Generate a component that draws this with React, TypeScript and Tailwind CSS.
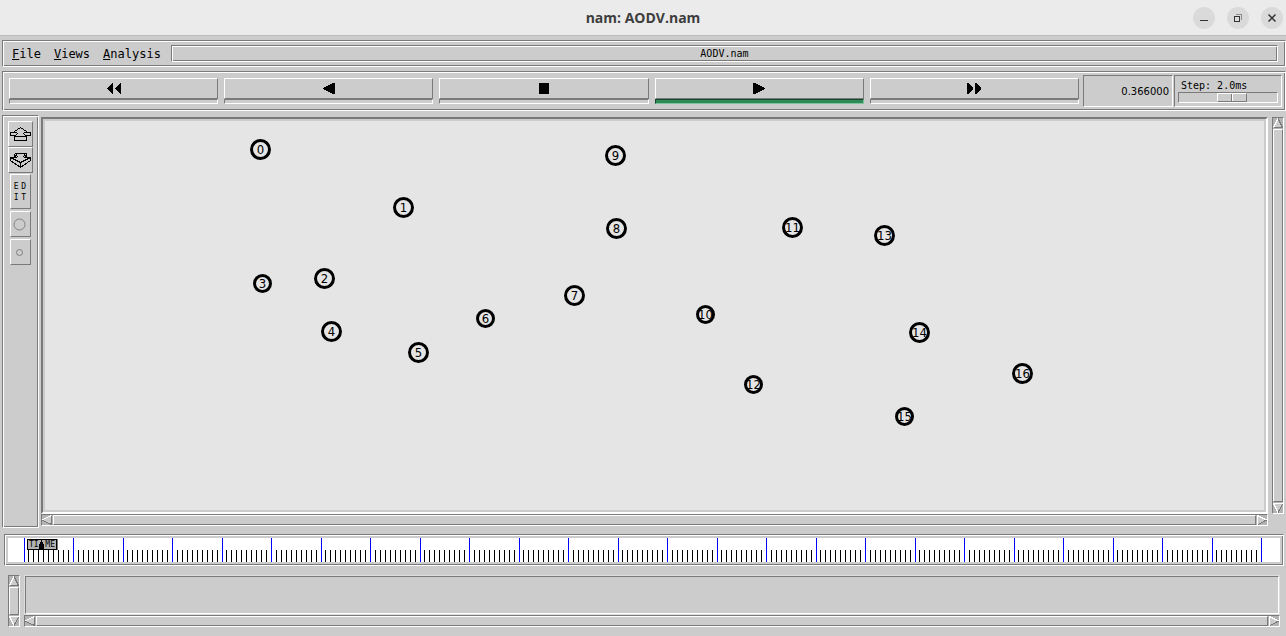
import React, { useState } from "react";

type Direction = "up" | "down" | "left" | "right";

const raised = "border border-t-white border-l-white border-b-[#7a7a7a] border-r-[#7a7a7a]";
const sunken = "border border-t-[#7a7a7a] border-l-[#7a7a7a] border-b-white border-r-white";
const groove = `${sunken} shadow-[inset_1px_1px_0_#ffffff,inset_-1px_-1px_0_#7a7a7a]`;
const mono = "font-['DejaVu_Sans_Mono','Liberation_Mono',monospace]";

const nodes = [
  { id: 0, x: 215, y: 28, r: 10 },
  { id: 1, x: 358, y: 86, r: 10 },
  { id: 2, x: 279, y: 157, r: 10 },
  { id: 3, x: 217, y: 162, r: 9 },
  { id: 4, x: 286, y: 210, r: 10 },
  { id: 5, x: 373, y: 231, r: 10 },
  { id: 6, x: 440, y: 197, r: 9 },
  { id: 7, x: 529, y: 174, r: 10 },
  { id: 8, x: 571, y: 107, r: 10 },
  { id: 9, x: 570, y: 34, r: 10 },
  { id: 10, x: 660, y: 193, r: 9 },
  { id: 11, x: 747, y: 106, r: 10 },
  { id: 12, x: 708, y: 263, r: 9 },
  { id: 13, x: 839, y: 114, r: 10 },
  { id: 14, x: 874, y: 211, r: 10 },
  { id: 15, x: 859, y: 295, r: 9 },
  { id: 16, x: 977, y: 252, r: 10 },
];

const ticks = Array.from({ length: 251 }, (_, i) => ({
  major: i % 10 === 0,
  left: ((15.54 + i * 4.95) / 1272) * 100,
}));

function TitleBar() {
  const round = "flex size-[22px] items-center justify-center rounded-full bg-[#dadada]";
  return (
    <header className="grid h-9 grid-cols-[1fr_auto_1fr] items-center border-b border-[#bcbcbc] bg-[#ebebeb] px-[3px]">
      <span />
      <h1 className="font-['Open_Sans','Noto_Sans',sans-serif] text-sm font-bold text-[#3d3d3d]">nam: AODV.nam</h1>
      <div className="flex justify-end gap-3">
        <button aria-label="Minimize" className={round}>
          <svg width="12" height="12" shapeRendering="crispEdges"><path d="M2 8.5H10" stroke="#333" /></svg>
        </button>
        <button aria-label="Restore" className={round}>
          <svg width="12" height="12" shapeRendering="crispEdges" fill="none">
            <path d="M4 2.5H9.5V8" stroke="#8c8c8c" />
            <path d="M2.5 4.5H7.5V9.5H2.5Z" stroke="#333" />
          </svg>
        </button>
        <button aria-label="Close" className={round}>
          <svg width="12" height="12"><path d="M2.5 2.5L9.5 9.5M9.5 2.5L2.5 9.5" stroke="#333" strokeWidth="1.5" /></svg>
        </button>
      </div>
    </header>
  );
}

function MenuBar() {
  return (
    <div className={`flex h-[27px] items-center gap-[10px] pr-[7px] pl-[9px] ${groove}`}>
      <nav className={`flex gap-[13px] text-xs ${mono}`}>
        {["File", "Views", "Analysis"].map((name) => (
          <button key={name}>
            <span className="underline underline-offset-1">{name[0]}</span>
            {name.slice(1)}
          </button>
        ))}
      </nav>
      <div className={`flex h-[17px] flex-1 items-center justify-center text-[10px] ${mono} ${groove}`}>AODV.nam</div>
    </div>
  );
}

const playback = [
  { name: "Rewind", path: "M6 0V11H5L0 6V5L5 0ZM14 0V11H13L8 6V5L13 0Z" },
  { name: "Play backward", path: "M13 0V11H11L1 6V5L11 0Z" },
  { name: "Stop", path: "M2 0H12V11H2Z" },
  { name: "Play", path: "M1 0V11H3L13 6V5L3 0Z" },
  { name: "Fast forward", path: "M0 0V11H1L6 6V5L1 0ZM8 0V11H9L14 6V5L9 0Z" },
];

function Toolbar() {
  const [active, setActive] = useState("Play");
  const [step, setStep] = useState(56);
  return (
    <div className={`flex h-10 gap-1 py-[3px] pr-[3px] pl-[6px] ${groove}`}>
      <div className="flex flex-1 gap-[6px] py-[3px]">
        {playback.map((item) => (
          <div key={item.name} className="flex flex-1 flex-col">
            <button
              aria-label={item.name}
              onClick={() => setActive(item.name)}
              className={`flex h-[21px] items-center justify-center ${raised}`}
            >
              <svg width="14" height="11" shapeRendering="crispEdges"><path d={item.path} /></svg>
            </button>
            <div
              className={
                active === item.name
                  ? "h-[5px] border border-t-[#17472c] border-r-[#7fc39b] border-b-[#7fc39b] border-l-[#17472c] bg-[#2e8b57]"
                  : `h-[5px] ${sunken}`
              }
            />
          </div>
        ))}
      </div>
      <div className="flex gap-px">
        <output
          className={`flex w-[90px] items-center justify-end pr-[3px] font-['DejaVu_Sans',sans-serif] text-[10px] ${sunken}`}
        >
          0.366000
        </output>
        <div className={`flex w-[108px] flex-col justify-end px-[3px] pb-[3px] ${sunken}`}>
          <label htmlFor="step" className={`pl-[3px] text-[10px] leading-3 ${mono}`}>Step: 2.0ms</label>
          <input
            id="step"
            type="range"
            min={0}
            max={100}
            value={step}
            onChange={(e) => setStep(Number(e.target.value))}
            className={`h-[11px] w-full appearance-none bg-[#cccccc] ${sunken} [&::-webkit-slider-thumb]:h-[9px] [&::-webkit-slider-thumb]:w-[30px] [&::-webkit-slider-thumb]:appearance-none [&::-webkit-slider-thumb]:rounded-none [&::-webkit-slider-thumb]:border [&::-webkit-slider-thumb]:border-t-white [&::-webkit-slider-thumb]:border-r-[#7a7a7a] [&::-webkit-slider-thumb]:border-b-[#7a7a7a] [&::-webkit-slider-thumb]:border-l-white [&::-webkit-slider-thumb]:bg-[linear-gradient(90deg,#cccccc_13px,#7a7a7a_13px,#7a7a7a_14px,#ffffff_14px,#ffffff_15px,#cccccc_15px)]`}
          />
        </div>
      </div>
    </div>
  );
}

const arrows: Record<Direction, { light: string; dark: string; fill: string }> = {
  up: { fill: "M5 0L10 10H0Z", light: "M0.5 9.5L5 0.5", dark: "M5 0.5L9.5 9.5H0.5" },
  down: { fill: "M0 0H10L5 10Z", light: "M10 0.5H0.5L5 9.5", dark: "M5 9.5L9.5 1" },
  left: { fill: "M10 0V10L0 5Z", light: "M0 5L9.5 0.5", dark: "M0 5L9.5 9.5V0.5" },
  right: { fill: "M0 0V10L10 5Z", light: "M0.5 10V0.5L9.5 5", dark: "M9.5 5L1 9.5" },
};

function ArrowButton({ dir }: { dir: Direction }) {
  const a = arrows[dir];
  return (
    <button aria-label={`Scroll ${dir}`} className="size-[10px] shrink-0 bg-[#b3b3b3]">
      <svg className="block" width="10" height="10" shapeRendering="crispEdges" fill="none">
        <path d={a.fill} fill="#cccccc" />
        <path d={a.dark} stroke="#7a7a7a" />
        <path d={a.light} stroke="#ffffff" />
      </svg>
    </button>
  );
}

function ScrollBar({ vertical = false }: { vertical?: boolean }) {
  return (
    <div className={`flex gap-px bg-[#b3b3b3] ${sunken} ${vertical ? "w-3 flex-col" : "h-3"}`}>
      <ArrowButton dir={vertical ? "up" : "left"} />
      <div className={`flex-1 bg-[#cccccc] ${raised}`} />
      <ArrowButton dir={vertical ? "down" : "right"} />
    </div>
  );
}

function ToolBox() {
  return (
    <aside className={`flex w-[37px] flex-col items-center pt-[5px] pr-[1px] ${groove}`}>
      <button aria-label="Zoom in" className={`h-[26px] w-[25px] ${raised}`}>
        <svg className="block" width="23" height="24" shapeRendering="crispEdges" fill="none" stroke="#000">
          <path d="M11.5 5.5L5.5 9.5V10.5M11.5 5.5L17.5 9.5V10.5M1.5 10.5H7.5L8.5 11.5L6.5 13.5H1.5ZM21.5 10.5H15.5L14.5 11.5L16.5 13.5H21.5ZM5.5 14.5H17.5V18.5H5.5Z" />
        </svg>
      </button>
      <button aria-label="Zoom out" className={`h-[26px] w-[25px] ${raised}`}>
        <svg className="block" width="23" height="24" shapeRendering="crispEdges" fill="none" stroke="#000">
          <path d="M5.5 5.5H17.5V8.5L15.5 7.5M5.5 5.5V8.5L7.5 7.5M6.5 5.5L8.5 8.5L7.5 9.5H1.5V12.5L11.5 19.5L21.5 12.5V9.5H15.5L14.5 8.5L16.5 5.5M1.5 9.5L11.5 14.5L21.5 9.5M11.5 14.5V19.5" />
        </svg>
      </button>
      <button
        className={`mt-px grid h-[35px] w-[21px] grid-cols-2 content-center px-[2px] text-center text-[8px] leading-[11px] ${mono} ${raised}`}
      >
        <span>E</span>
        <span>D</span>
        <span>I</span>
        <span>T</span>
      </button>
      <button aria-label="Larger nodes" className={`mt-[2px] flex h-[26px] w-[21px] items-center justify-center pr-[2px] ${raised}`}>
        <svg width="13" height="13" fill="none" stroke="#808080"><circle cx="6.5" cy="6.5" r="5.5" /></svg>
      </button>
      <button aria-label="Smaller nodes" className={`mt-[2px] flex h-[26px] w-[21px] items-center justify-center pr-[2px] ${raised}`}>
        <svg width="7" height="7" fill="none" stroke="#808080"><circle cx="3.5" cy="3.5" r="3" /></svg>
      </button>
    </aside>
  );
}

function NetworkView() {
  return (
    <div className="flex flex-1 flex-col border-2 border-t-[#7a7a7a] border-r-white border-b-white border-l-[#7a7a7a] p-[2px]">
      <div className="relative min-h-80 flex-1 overflow-hidden bg-[#e5e5e5]">
        {nodes.map((n) => (
          <div
            key={n.id}
            className={`absolute flex items-center justify-center rounded-full border-[3px] border-black font-['DejaVu_Sans_Condensed','DejaVu_Sans',sans-serif] text-[13px] leading-3 ${n.r === 10 ? "size-[21px]" : "size-[19px]"}`}
            style={{ left: n.x - n.r, top: n.y - n.r }}
          >
            {n.id}
          </div>
        ))}
      </div>
    </div>
  );
}

function TimeLine() {
  return (
    <div className={`mr-[2px] ml-[2px] p-[3px] ${groove}`}>
      <div className="relative h-6 bg-white">
        <svg className="block h-6 w-full" shapeRendering="crispEdges">
          {ticks.map((t, i) => (
            <rect
              key={i}
              x={`${t.left}%`}
              y={t.major ? 0 : 12}
              width="1"
              height={t.major ? 24 : 12}
              fill={t.major ? "#0000ff" : "#000000"}
            />
          ))}
        </svg>
        <div
          className={`absolute top-px left-[19px] flex h-[11px] w-[30px] items-center justify-between border border-black bg-[#b3b3b3] px-px text-[8px] leading-[9px] shadow-[1px_0_0_#7a7a7a] ${mono}`}
        >
          <span>TI</span>
          <svg className="absolute top-0 left-[11px]" width="5" height="9" shapeRendering="crispEdges">
            <path d="M2 0H3V2H4V4H5V9H0V4H1V2H2Z" />
          </svg>
          <span>ME</span>
        </div>
      </div>
    </div>
  );
}

export default function App() {
  return (
    <div className="flex min-h-screen flex-col bg-[#cccccc] text-black">
      <TitleBar />
      <main className="flex flex-1 flex-col gap-1 pt-1 pb-[9px] pl-[2px]">
        <MenuBar />
        <Toolbar />
        <section className="flex flex-1 gap-[2px] pr-[2px]">
          <ToolBox />
          <div className="flex flex-1 gap-1 pt-[2px]">
            <div className="flex flex-1 flex-col pb-[2px]">
              <NetworkView />
              <ScrollBar />
            </div>
            <div className="flex pb-[14px]">
              <ScrollBar vertical />
            </div>
          </div>
        </section>
        <div className="pt-[2px]">
          <TimeLine />
        </div>
        <section className="flex gap-1 pt-[5px] pr-[6px] pl-[6px]">
          <ScrollBar vertical />
          <div className="flex flex-1 flex-col">
            <div className="h-10 border border-[#dddddd]">
              <div className={`h-full ${sunken}`} />
            </div>
            <ScrollBar />
          </div>
        </section>
      </main>
    </div>
  );
}
